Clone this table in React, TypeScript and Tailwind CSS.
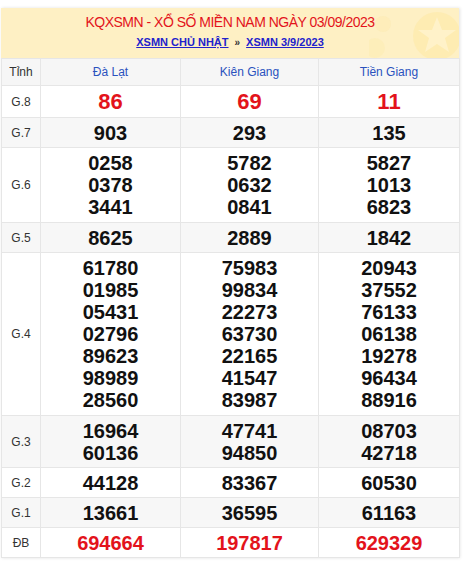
const provinces = ["Đà Lạt", "Kiên Giang", "Tiền Giang"];

type Row = { label: string; values: string[][]; red?: boolean; big?: boolean; pad?: string };

const rows: Row[] = [
  { label: "G.8", values: [["86"], ["69"], ["11"]], red: true, big: true, pad: "pt-[5px] pb-[4px]" },
  { label: "G.7", values: [["903"], ["293"], ["135"]] },
  {
    label: "G.6",
    values: [
      ["0258", "0378", "3441"],
      ["5782", "0632", "0841"],
      ["5827", "1013", "6823"],
    ],
    pad: "pt-[4px] pb-[4px]",
  },
  { label: "G.5", values: [["8625"], ["2889"], ["1842"]] },
  {
    label: "G.4",
    values: [
      ["61780", "01985", "05431", "02796", "89623", "98989", "28560"],
      ["75983", "99834", "22273", "63730", "22165", "41547", "83987"],
      ["20943", "37552", "76133", "06138", "19278", "96434", "88916"],
    ],
    pad: "pt-[4px] pb-[4px]",
  },
  {
    label: "G.3",
    values: [
      ["16964", "60136"],
      ["47741", "94850"],
      ["08703", "42718"],
    ],
  },
  { label: "G.2", values: [["44128"], ["83367"], ["60530"]] },
  { label: "G.1", values: [["13661"], ["36595"], ["61163"]] },
  { label: "ĐB", values: [["694664"], ["197817"], ["629329"]], red: true },
];

function StarBadge() {
  return (
    <svg
      className="absolute right-0 top-0 h-[50px] w-[90px]"
      viewBox="0 0 90 50"
      aria-hidden
    >
      <circle cx="68" cy="28" r="24" fill="#fde9ab" opacity="0.7" />
      <polygon
        points="68,9 73,22 87,22 76,30 80,44 68,36 56,44 60,30 49,22 63,22"
        fill="#fff3cc"
        opacity="0.85"
      />
      <circle cx="14" cy="16" r="8" fill="#fdeab0" opacity="0.5" />
      <circle cx="6" cy="40" r="10" fill="#fdeab0" opacity="0.45" />
    </svg>
  );
}

export default function App() {
  return (
    <div className="min-h-[562px] bg-white pt-[8px] pl-[1px] font-['Liberation_Sans',Arial,sans-serif]">
      <div className="w-[458px] shadow-[1px_0_3px_rgba(0,0,0,0.12)]">
        <div className="relative h-[50px] overflow-hidden bg-[#fef0c4] text-center">
          <StarBadge />
          <div className="relative pt-[4px] text-[14px] leading-[21px] tracking-[-0.5px] text-[#e3131b]">
            KQXSMN - XỔ SỐ MIỀN NAM NGÀY 03/09/2023
          </div>
          <div className="relative text-[11px] font-bold leading-[18px] text-[#2222cc]">
            <a href="#" className="underline">XSMN CHỦ NHẬT</a>
            <span className="mx-[6px] text-[10px] text-[#333]">»</span>
            <a href="#" className="underline">XSMN 3/9/2023</a>
          </div>
        </div>
        <table className="w-full table-fixed border-collapse text-center">
          <colgroup>
            <col className="w-[39px]" />
            <col className="w-[140px]" />
            <col className="w-[138px]" />
            <col className="w-[141px]" />
          </colgroup>
          <thead>
            <tr className="h-[27px] bg-[#f6f6f6]">
              <th className="border border-[#e6e6e6] text-[12px] font-normal text-[#333]">Tỉnh</th>
              {provinces.map((p) => (
                <th key={p} className="border border-[#e6e6e6] text-[12px] font-normal text-[#2a52be]">
                  {p}
                </th>
              ))}
            </tr>
          </thead>
          <tbody>
            {rows.map((r, i) => (
              <tr key={r.label} className={i % 2 === 1 ? "bg-[#f7f7f7]" : "bg-white"}>
                <td className="border border-[#e6e6e6] text-[12px] text-[#333]">{r.label}</td>
                {r.values.map((v, j) => (
                  <td
                    key={j}
                    className={`border border-[#e6e6e6] font-bold leading-[22px] ${
                      r.pad ?? "pt-[4px] pb-[3px]"
                    } ${r.red ? "text-[#e3131b]" : "text-[#111]"} ${
                      r.big ? "text-[22px]" : "text-[20px]"
                    }`}
                  >
                    {v.map((n) => (
                      <div key={n}>{n}</div>
                    ))}
                  </td>
                ))}
              </tr>
            ))}
          </tbody>
        </table>
      </div>
    </div>
  );
}
